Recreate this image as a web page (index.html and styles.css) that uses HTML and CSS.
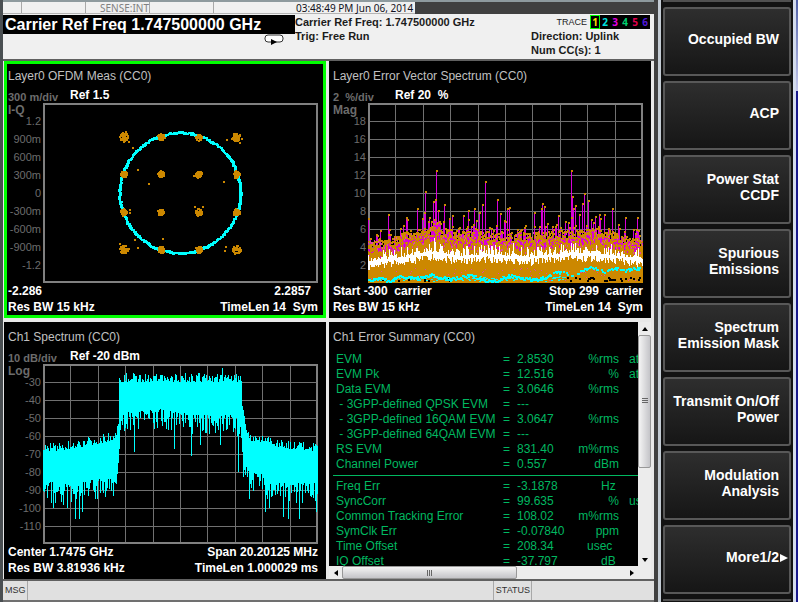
FILE: index.html
```html
<!DOCTYPE html>
<html lang="en">
<head>
  <meta charset="UTF-8" />
  <title>Signal Analyzer</title>
  <meta name="viewport" content="width=device-width, initial-scale=1.0" />
  <link rel="stylesheet" href="styles.css">
</head>
<body>
  <div class="app">
    <main class="screen">
      <div class="ribbon">
        <div class="ribbon-cells">
          <span class="cell narrow"></span>
          <span class="cell"></span>
          <span class="cell sense">SENSE:INT</span>
          <span class="cell"></span>
          <time class="clock">03:48:49 PM Jun 06, 2014</time>
        </div>
      </div>

      <header class="header">
        <div class="active-function">
          <h1>Carrier Ref Freq 1.747500000 GHz</h1>
          <svg class="loop" viewBox="0 0 20 11" width="20" height="11">
            <rect x="1" y="1" width="18" height="7" rx="3" fill="#fff" stroke="#333" />
            <path d="M7 5 L13 8 L7 11 Z" fill="#000" />
          </svg>
        </div>
        <div class="info">
          <div>Carrier Ref Freq: 1.747500000 GHz</div>
          <div>Trig: Free Run</div>
        </div>
        <div class="info info-right">
          <div class="trace">
            <span>TRACE</span>
            <div class="trace-list">
              <b class="t1">1</b><b class="t2">2</b><b class="t3">3</b><b class="t4">4</b><b class="t5">5</b><b class="t6">6</b>
            </div>
          </div>
          <div>Direction: Uplink</div>
          <div>Num CC(s): 1</div>
        </div>
      </header>

      <div class="panels">
        <section class="panel active">
          <h2>Layer0 OFDM Meas (CC0)</h2>
          <div class="scale"><span class="div">300 m/div</span><span>Ref 1.5</span></div>
          <div class="plot">
            <div class="axis">
              <span class="unit">I-Q</span>
              <span>1.2</span><span>900m</span><span>600m</span><span>300m</span><span>0</span>
              <span>-300m</span><span>-600m</span><span>-900m</span><span>-1.2</span>
            </div>
            <svg id="constellation" viewBox="0 0 275 180"></svg>
          </div>
          <div class="foot"><span>-2.286</span><span class="inset">2.2857</span></div>
          <div class="foot"><span>Res BW 15 kHz</span><span>TimeLen 14&nbsp; Sym</span></div>
        </section>

        <section class="panel">
          <h2>Layer0 Error Vector Spectrum (CC0)</h2>
          <div class="scale"><span class="div">2&nbsp; %/div</span><span>Ref 20&nbsp; %</span></div>
          <div class="plot">
            <div class="axis">
              <span class="unit">Mag</span>
              <span>18</span><span>16</span><span>14</span><span>12</span><span>10</span>
              <span>8</span><span>6</span><span>4</span><span>2</span>
            </div>
            <svg id="evm" viewBox="0 0 275 180" preserveAspectRatio="none"></svg>
          </div>
          <div class="foot"><span>Start -300&nbsp; carrier</span><span>Stop 299&nbsp; carrier</span></div>
          <div class="foot"><span>Res BW 15 kHz</span><span>TimeLen 14&nbsp; Sym</span></div>
        </section>

        <section class="panel">
          <h2>Ch1 Spectrum (CC0)</h2>
          <div class="scale"><span class="div">10 dB/div</span><span>Ref -20 dBm</span></div>
          <div class="plot">
            <div class="axis">
              <span class="unit">Log</span>
              <span>-30</span><span>-40</span><span>-50</span><span>-60</span><span>-70</span>
              <span>-80</span><span>-90</span><span>-100</span><span>-110</span>
            </div>
            <svg id="spectrum" viewBox="0 0 275 180" preserveAspectRatio="none"></svg>
          </div>
          <div class="foot"><span>Center 1.7475 GHz</span><span>Span 20.20125 MHz</span></div>
          <div class="foot"><span>Res BW 3.81936 kHz</span><span>TimeLen 1.000029 ms</span></div>
        </section>

        <section class="summary">
          <div class="summary-body">
            <h2>Ch1 Error Summary (CC0)</h2>
            <table>
              <tbody>
                <tr><th>EVM</th><td>=</td><td>2.8530</td><td>%rms</td><td>at</td></tr>
                <tr><th>EVM Pk</th><td>=</td><td>12.516</td><td>%</td><td>at</td></tr>
                <tr><th>Data EVM</th><td>=</td><td>3.0646</td><td>%rms</td><td></td></tr>
                <tr><th>&nbsp;- 3GPP-defined QPSK EVM</th><td>=</td><td>---</td><td></td><td></td></tr>
                <tr><th>&nbsp;- 3GPP-defined 16QAM EVM</th><td>=</td><td>3.0647</td><td>%rms</td><td></td></tr>
                <tr><th>&nbsp;- 3GPP-defined 64QAM EVM</th><td>=</td><td>---</td><td></td><td></td></tr>
                <tr><th>RS EVM</th><td>=</td><td>831.40</td><td>m%rms</td><td></td></tr>
                <tr><th>Channel Power</th><td>=</td><td>0.557</td><td>dBm</td><td></td></tr>
              </tbody>
            </table>
            <hr>
            <table>
              <tbody>
                <tr><th>Freq Err</th><td>=</td><td>-3.1878</td><td>Hz&nbsp;</td><td></td></tr>
                <tr><th>SyncCorr</th><td>=</td><td>99.635</td><td>%</td><td>us</td></tr>
                <tr><th>Common Tracking Error</th><td>=</td><td>108.02</td><td>m%rms</td><td></td></tr>
                <tr><th>SymClk Err</th><td>=</td><td>-0.07840</td><td>ppm</td><td></td></tr>
                <tr><th>Time Offset</th><td>=</td><td>208.34</td><td>usec&nbsp;&nbsp;</td><td></td></tr>
                <tr><th>IQ Offset</th><td>=</td><td>-37.797</td><td>dB&nbsp;</td><td></td></tr>
              </tbody>
            </table>
          </div>
          <div class="vbar">
            <button aria-label="Scroll up"><svg viewBox="0 0 6 4" width="6" height="4"><path d="M0 4 L3 0 L6 4 Z" /></svg></button>
            <div class="track"><div class="thumb"></div></div>
            <button aria-label="Scroll down"><svg viewBox="0 0 6 4" width="6" height="4"><path d="M0 0 L3 4 L6 0 Z" /></svg></button>
          </div>
          <div class="hbar">
            <button aria-label="Scroll left"><svg viewBox="0 0 4 6" width="4" height="6"><path d="M4 0 L0 3 L4 6 Z" /></svg></button>
            <div class="track"><div class="thumb"></div></div>
            <button aria-label="Scroll right"><svg viewBox="0 0 4 6" width="4" height="6"><path d="M0 0 L4 3 L0 6 Z" /></svg></button>
          </div>
          <div class="corner"></div>
        </section>
      </div>

      <footer class="status">
        <span class="label">MSG</span>
        <span class="message"></span>
        <span class="label">STATUS</span>
        <span class="state"></span>
      </footer>
    </main>

    <div class="bezel"></div>

    <nav class="keys">
      <button>Occupied BW</button>
      <button>ACP</button>
      <button>Power Stat<br>CCDF</button>
      <button>Spurious<br>Emissions</button>
      <button>Spectrum<br>Emission Mask</button>
      <button>Transmit On/Off<br>Power</button>
      <button>Modulation<br>Analysis</button>
      <button class="more">More1/2<svg viewBox="0 0 8 8" width="8" height="8"><path d="M0 0 L8 4 L0 8 Z" fill="#fff" /></svg></button>
    </nav>
    <div class="desktop"></div>
  </div>

  <script src="script.js"></script>
</body>
</html>
```
FILE: styles.css
```css
:root {
  --face: #f0f0f0;
  --frame: #404040;
  --grid: #808080;
  --axis: #6c6c6c;
  --green: #00ff00;
  --result: #00b860;
}

* {
  box-sizing: border-box;
}

body {
  margin: 0;
  background: var(--frame);
  font-family: "Liberation Sans", Arial, sans-serif;
  font-size: 12px;
}

h1, h2 {
  margin: 0;
}

button {
  font-family: inherit;
  cursor: pointer;
}

.app {
  display: flex;
  min-height: 100vh;
  overflow: hidden;
}

.screen {
  flex: 1;
  min-width: 0;
  display: flex;
  flex-direction: column;
  border-left: 3px solid #4a4f52;
}

/* top ribbon */
.ribbon {
  display: flex;
  border-top: 2px solid #8e9a9e;
  font-family: "Noto Sans", "Open Sans", sans-serif;
  line-height: 12px;
}

.ribbon-cells {
  display: flex;
  height: 12px;
  background: var(--face);
  border-bottom: 1px solid #b4b4b4;
}

.cell {
  width: 64px;
  border-right: 1px solid #a8a8a8;
}

.cell.narrow {
  width: 19px;
}

.sense {
  color: #808080;
  font-size: 10px;
  text-align: right;
}

.clock {
  padding-left: 82px;
  width: 201px;
  font-size: 10px;
  color: #101020;
  white-space: nowrap;
}

/* header */
.header {
  display: flex;
  background: var(--face);
  min-height: 45px;
  padding-top: 1px;
}

.active-function {
  width: 292px;
}

.active-function h1 {
  background: #000;
  color: #fff;
  font-size: 16px;
  line-height: 19px;
  padding-left: 2px;
}

.loop {
  display: block;
  margin-left: auto;
  margin-right: 11px;
}

.info {
  flex: 1;
  font-size: 11px;
  font-weight: bold;
  line-height: 14px;
  color: #1c1c1c;
  white-space: nowrap;
}

.info-right {
  flex: 0 0 123px;
}

.trace {
  display: flex;
  justify-content: flex-end;
  gap: 3px;
  padding-right: 4px;
  font-size: 9px;
  font-weight: normal;
}

.trace-list {
  display: flex;
  background: #000;
}

.trace-list b {
  width: 10px;
  font-family: "Noto Sans", sans-serif;
  font-size: 10px;
  line-height: 14px;
  text-align: center;
}

.trace-list .t1 { color: #ffe000; outline: 1px solid var(--green); outline-offset: -1px; }
.trace-list .t2 { color: #00e0e0; }
.trace-list .t3 { color: #e000e0; }
.trace-list .t4 { color: #00d070; }
.trace-list .t5 { color: #e00050; }
.trace-list .t6 { color: #5018d8; }

/* measurement panels */
.panels {
  display: grid;
  grid-template-columns: 1fr 1fr;
  gap: 4px 3px;
  padding: 0 3px 0 1px;
  background: #e8e8e8;
  border-top: 2px solid #606060;
}

.panel {
  min-width: 0;
  background: #000;
  border: 3px solid #000;
  padding: 4px 5px 0 1px;
  color: #fff;
}

.panel.active {
  border-color: var(--green);
}

.panel h2,
.summary h2 {
  font-size: 12px;
  font-weight: normal;
  line-height: 16px;
  color: #c0c0c0;
  white-space: nowrap;
}

.scale {
  display: flex;
  margin-top: 3px;
  line-height: 16px;
  font-weight: bold;
}

.div {
  width: 62px;
  font-size: 11px;
  line-height: 20px;
  height: 16px;
  color: var(--axis);
}

.plot {
  display: flex;
  height: 180px;
}

.axis {
  display: flex;
  flex-direction: column;
  width: 35px;
  padding-right: 2px;
  color: var(--axis);
  font-size: 11px;
  line-height: 18px;
  text-align: right;
}

.axis .unit {
  height: 9px;
  line-height: 14px;
  font-size: 12px;
  font-weight: bold;
  text-align: left;
}

.plot svg {
  flex: 1;
  min-width: 0;
  height: 180px;
}

.foot {
  display: flex;
  justify-content: space-between;
  font-weight: bold;
  line-height: 16px;
  white-space: nowrap;
}

.inset {
  padding-right: 7px;
}

/* error summary */
.summary {
  contain: size;
  display: grid;
  grid-template-columns: 1fr 13px;
  grid-template-rows: 1fr 13px;
  background: #000;
}

.summary-body {
  min-width: 0;
  min-height: 0;
  overflow: hidden;
  padding: 7px 0 0 4px;
}

.summary table {
  table-layout: fixed;
  width: 320px;
  margin-top: 7px;
  border-collapse: collapse;
  color: var(--result);
  line-height: 15px;
  white-space: nowrap;
}

.summary hr {
  margin: 3px 0 0;
  border: none;
  border-top: 1px solid var(--result);
}

.summary hr + table {
  margin-top: 3px;
}

.summary th,
.summary td {
  padding: 0;
  font-weight: normal;
  text-align: left;
}

.summary th { width: 170px; padding-left: 3px; }
.summary td:nth-child(2) { width: 14px; }
.summary td:nth-child(3) { width: 60px; }
.summary td:nth-child(4) { width: 42px; text-align: right; }
.summary td:nth-child(5) { padding-left: 10px; }

.vbar,
.hbar {
  display: flex;
  background: #ececec;
}

.vbar {
  flex-direction: column;
}

.vbar button,
.hbar button {
  display: flex;
  align-items: center;
  justify-content: center;
  width: 13px;
  height: 13px;
  padding: 0;
  border: none;
  background: none;
}

.track {
  flex: 1;
  display: flex;
}

.vbar .track {
  flex-direction: column;
}

.thumb {
  border: 1px solid #989898;
  border-radius: 2px;
  background: linear-gradient(to right, #f4f4f4, #c4c4c8);
}

.vbar .thumb {
  height: 61%;
}

.hbar .thumb {
  width: 62%;
  background: linear-gradient(#f4f4f4, #c4c4c8);
}

/* grip lines */
.thumb::before {
  content: "";
  display: block;
  width: 6px;
  height: 6px;
  margin: 62px auto 0;
  background: repeating-linear-gradient(#666 0 1px, transparent 1px 2px);
}

.hbar .thumb::before {
  margin: 3px auto 0;
  background: repeating-linear-gradient(to right, #666 0 1px, transparent 1px 2px);
}

.corner {
  background: #ececec;
}

/* status line */
.status {
  display: flex;
  flex: 1;
  min-height: 23px;
  border-top: 2px solid #606060;
  border-bottom: 2px solid #707070;
  background: #e0e0e0;
  font-size: 9px;
  line-height: 18px;
  color: #303030;
}

.status span {
  border-right: 1px solid #a8a8a8;
}

.label {
  padding: 0 1px 0 2px;
}

.message {
  flex: 1;
}

.status .state {
  width: 122px;
  border-right: none;
}

.bezel {
  width: 7px;
  border: solid #c4ccd4;
  border-width: 0 3px 0 0;
  background: var(--frame);
}

/* softkeys */
.keys {
  display: flex;
  flex-direction: column;
  gap: 5px;
  width: 132px;
  padding: 0 2px;
  background: #121212;
}

.keys::before,
.keys::after {
  content: "";
  height: 2px;
  background: #505050;
}

.keys button {
  height: 69px;
  padding: 0 10px 6px 0;
  border: 2px solid #585858;
  border-radius: 3px;
  background: linear-gradient(#2e2e2e, #161616);
  color: #fff;
  font-size: 14px;
  font-weight: bold;
  line-height: 16px;
  text-align: right;
  white-space: nowrap;
}

.keys .more {
  padding-right: 1px;
}

.more svg {
  margin-left: 1px;
}

.desktop {
  width: 5px;
  border-left: 3px solid #d4dcec;
  background: linear-gradient(#5060a8, #c4c8ec 91px, #18188c 91px);
}
```
FILE: script.js
```javascript
const W = 275;
const H = 180;

// small seeded generator so the traces are the same on every load
let seed = 7;
function rnd() {
  seed = (seed * 16807) % 2147483647;
  return seed / 2147483647;
}

function add(svg, tag, attrs) {
  const el = document.createElementNS("http://www.w3.org/2000/svg", tag);
  for (const key in attrs) el.setAttribute(key, attrs[key]);
  svg.appendChild(el);
}

function stroke(svg, d, color, width) {
  add(svg, "path", { d: d, fill: "none", stroke: color, "stroke-width": width, "shape-rendering": "crispEdges" });
}

function fill(svg, d, color) {
  add(svg, "path", { d: d, fill: color, "shape-rendering": "crispEdges" });
}

function box(x, y, w, h) {
  return `M${x.toFixed(1)} ${y.toFixed(1)}h${w}v${h}h${-w}z`;
}

function drawFrame(svg, grid) {
  if (grid) {
    let d = "";
    for (let i = 1; i < 10; i++) {
      d += `M${Math.round(i * 27.4) + 0.5} 0V${H}M0 ${i * 18 + 0.5}H${W}`;
    }
    stroke(svg, d, "#707070", 1);
  }
  add(svg, "rect", { x: 1, y: 1, width: W - 2, height: H - 2, fill: "none", stroke: "#808080", "stroke-width": 2 });
}

// linear interpolation through a list of [x, y] points
function curve(points, x) {
  for (let i = 1; i < points.length; i++) {
    const [x0, y0] = points[i - 1];
    const [x1, y1] = points[i];
    if (x <= x1) return y0 + (y1 - y0) * (x - x0) / (x1 - x0);
  }
  return points[points.length - 1][1];
}

function drawConstellation() {
  const svg = document.getElementById("constellation");
  drawFrame(svg, false);

  let ring = "";
  for (let a = 0; a < 360; a += 1.2) {
    const r = 60.2 + (rnd() - 0.5) * 1.6;
    const t = a * Math.PI / 180;
    ring += box(137.3 + r * Math.cos(t) - 1.2, 90 + r * Math.sin(t) - 1.2, 2.6, 2.6);
  }
  fill(svg, ring, "#00ffff");

  let dots = "";
  for (const x of [81, 118.3, 156, 193.7]) {
    for (const y of [34.4, 71.5, 109.5, 147]) {
      const corner = (x < 90 || x > 190) && (y < 40 || y > 140);
      const spread = corner ? 4.2 : 3.3;
      for (let i = 0; i < 46; i++) {
        const a = rnd() * Math.PI * 2;
        const r = Math.sqrt(rnd()) * spread;
        dots += box(x + r * Math.cos(a) - 1, y + r * Math.sin(a) - 1, 2, 2);
      }
    }
  }
  const strays = [
    [86, 39], [90, 45], [83, 29], [184, 37], [189, 36], [197, 40], [199, 36], [95, 67], [106, 81],
    [181, 79], [152, 104], [160, 104], [120, 136], [92, 137], [95, 145], [183, 144],
    [182, 148], [151, 73], [87, 107], [87, 110], [77, 141], [86, 146]
  ];
  for (const [x, y] of strays) dots += box(x - 1, y - 1, 2, 2);
  fill(svg, dots, "#cc8800");
}

function drawEvm() {
  const svg = document.getElementById("evm");
  drawFrame(svg, true);

  const Y = v => H - v * 9;
  const spikes = [
    [0, 7.1], [20, 7.6], [38, 7.2], [49, 8.2], [56, 7.8], [57, 10.1], [65, 9], [67, 9.2], [68, 12.4], [70, 8],
    [76, 8.7], [84, 7.4], [95, 7.4], [100, 8], [106, 8.2], [111, 7.8], [114, 8.7], [117, 11.2],
    [129, 9.2], [132, 7.7], [139, 8.2], [141, 8.3], [166, 7.8], [173, 8.2], [174, 8.8], [176, 8.5],
    [203, 12.5], [204, 9.6], [205, 8.2], [207, 8.6], [214, 8.8], [216, 9.9], [220, 9.1], [227, 7.3],
    [231, 7.6], [236, 7.6], [244, 8.2], [257, 7.2], [269, 7.2]
  ];
  const level = [[0, 4.6], [25, 4.9], [35, 5.6], [65, 6.1], [90, 5.7], [130, 5.4], [200, 5.7], [230, 6], [255, 5.2], [275, 4.7]];

  let stems = "";
  let tips = "";
  let body = "";
  let specks = "";
  for (let x = 0; x < W; x++) {
    const top = curve(level, x);
    const peak = top - 0.9 + rnd() * rnd() * 3;
    stems += `M${x + 0.5} ${H - 1}V${Y(peak).toFixed(1)}`;
    tips += box(x, Y(peak) - 1, 2, 2);
    body += `M${x + 0.5} ${H}V${Y(top - 2 + rnd() * 1.2).toFixed(1)}`;
    for (let i = 0; i < 3; i++) tips += box(x, Y(top - 1.8 + rnd() * 2), 1.6, 2);
    if (rnd() < 0.6) specks += box(x, Y(3.4 + rnd() * (top - 3.2)), 1, 2);
    if (rnd() < 0.25) specks += box(x, Y(0.3 + rnd() * 1.4), 1, 1);
  }
  for (const [x, v] of spikes) {
    stems += `M${x + 0.5} ${H - 1}V${Y(v)}`;
    tips += box(x, Y(v) - 1, 2, 2);
  }
  stroke(svg, stems, "#d800d8", 1);
  stroke(svg, body, "#cc8800", 1);
  fill(svg, tips, "#cc8800");
  fill(svg, specks, "#e048a0");

  // black gaps close to the floor
  let gaps = "";
  for (let i = 0; i < 40; i++) gaps += box(rnd() * 80 + (i % 4 ? 192 : 10), H - 3 - rnd() * 3, 2, 2);
  fill(svg, gaps, "#000");

  // rms average
  const mean = [[0, 2.2], [30, 2.6], [65, 3.3], [90, 2.8], [115, 3], [160, 2.7], [205, 3.2], [230, 3], [275, 2.5]];
  let white = "";
  for (let x = 0; x < W; x++) {
    const m = curve(mean, x);
    white += `M${x + 0.5} ${Y(m - rnd() * 0.8).toFixed(1)}V${Y(m + 0.2 + Math.pow(rnd(), 2) * 1.1).toFixed(1)}`;
  }
  for (const [x, v] of [[66, 5], [67, 4.6], [33, 4], [116, 4.1], [145, 4.5], [203, 4.5], [207, 4.4], [243, 4.3]]) {
    white += `M${x + 0.5} ${Y(2.8)}V${Y(v)}`;
  }
  stroke(svg, white, "#ffffff", 1);

  // reference signal error
  const low = [[0, 0.3], [12, 0.5], [22, 0.2], [30, 0.7], [50, 0.4], [62, 0.9], [75, 0.4], [90, 0.5], [102, 0.8], [112, 0.5],
    [120, 0.1], [128, 0.2], [140, 0.8], [155, 0.5], [172, 0.3], [185, 1.1], [200, 1.1], [206, 0.5], [214, 1.4],
    [222, 1.8], [235, 1.2], [245, 1.6], [258, 1.4], [275, 1.6]];
  let cyan = "";
  for (let x = 0; x < W - 2; x++) {
    if (x > 180 && rnd() < 0.35) continue;
    cyan += box(x, Math.min(H - 2, Y(curve(low, x) + (rnd() - 0.5) * 0.35) - 1), 2, 2);
  }
  for (let i = 0; i < 110; i++) cyan += box(rnd() * 200, H - 2 - rnd() * 5, 2, 1);
  fill(svg, cyan, "#00ffff");
}

function drawSpectrum() {
  const svg = document.getElementById("spectrum");
  drawFrame(svg, true);

  const Y = db => (-20 - db) * 1.8;
  const upper = [[0, -69], [20, -68], [40, -66], [60, -64], [72, -62], [75, -54], [76, -30], [198, -30], [199, -46], [202, -56], [207, -63], [225, -64], [240, -67], [275, -69]];
  const lower = [[0, -86], [30, -88], [55, -84], [73, -84], [76, -62], [79, -48], [115, -46], [150, -49], [196, -49], [198, -60], [200, -76], [206, -80], [218, -82], [235, -87], [275, -87]];
  const drops = [[10, -100], [24, -100], [32, -106], [36, -106], [39, -102], [54, -95], [91, -69], [131, -67], [148, -71],
    [157, -65], [177, -65], [195, -80], [206, -95], [222, -102], [226, -100], [240, -105], [245, -106], [256, -106], [273, -102]];

  let d = "";
  for (let x = 0; x < W; x++) {
    const top = curve(upper, x) + Math.pow(rnd(), 1.3) * 5;
    const bottom = curve(lower, x) - Math.pow(rnd(), 1.6) * 12 + 1;
    d += `M${x + 0.5} ${Y(top).toFixed(1)}V${Y(bottom).toFixed(1)}`;
  }
  for (const [x, db] of drops) d += `M${x + 0.5} ${Y(curve(upper, x))}V${Y(db)}`;
  d += `M179.5 ${Y(-22)}V60`;
  stroke(svg, d, "#00ffff", 1);
}

drawConstellation();
drawEvm();
drawSpectrum();
```
